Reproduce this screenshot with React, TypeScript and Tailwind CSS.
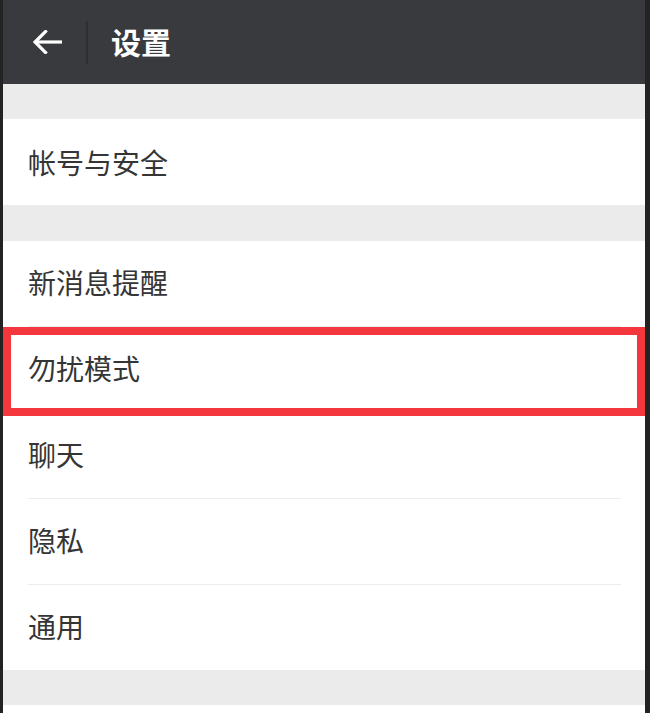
import React from 'react';

const font = { fontFamily: '"Noto Sans CJK SC", "Noto Sans", sans-serif' };

function Row({ label, last }: { label: string; last?: boolean }) {
  return (
    <div>
      <div className="h-[85px] flex items-center pl-[25px] pb-[3px] text-[28px] text-[#353535]">{label}</div>
      {!last && <div className="h-px bg-[#ececec] ml-[25px] mr-[24px]" />}
    </div>
  );
}

export default function App() {
  return (
    <div className="w-[650px] h-[713px] bg-[#232323] pl-[3px] pr-[5px] overflow-hidden" style={font}>
      <div className="h-full flex flex-col bg-white">
        {/* Header */}
        <div className="h-[84px] shrink-0 bg-[#393a3e] flex items-center">
          <svg width="29" height="24" viewBox="0 0 29 24" className="ml-[30px]" fill="none">
            <path d="M2 12H29" stroke="white" strokeWidth="3.2" />
            <path d="M12.5 1.5L2 12L12.5 22.5" stroke="white" strokeWidth="3.2" strokeLinecap="square" />
          </svg>
          <div className="w-[2px] h-[43px] bg-[#2e2f33] ml-[24px]" />
          <div className="ml-[23px] pb-[3px] text-[30px] font-bold text-white leading-none">设置</div>
        </div>

        <div className="h-[35px] shrink-0 bg-[#ebebeb]" />
        <div className="h-[86px] flex items-center pl-[25px] text-[28px] text-[#353535]">帐号与安全</div>
        <div className="h-[36px] shrink-0 bg-[#ebebeb]" />

        <Row label="新消息提醒" />
        <div className="relative">
          <Row label="勿扰模式" />
          <div className="absolute left-0 right-0 top-0 h-[89px] border-[8px] border-[#f4373d]" />
        </div>
        <Row label="聊天" />
        <Row label="隐私" />
        <Row label="通用" last />

        <div className="h-[35px] shrink-0 bg-[#ebebeb]" />
        <div className="flex-1 bg-white" />
      </div>
    </div>
  );
}
